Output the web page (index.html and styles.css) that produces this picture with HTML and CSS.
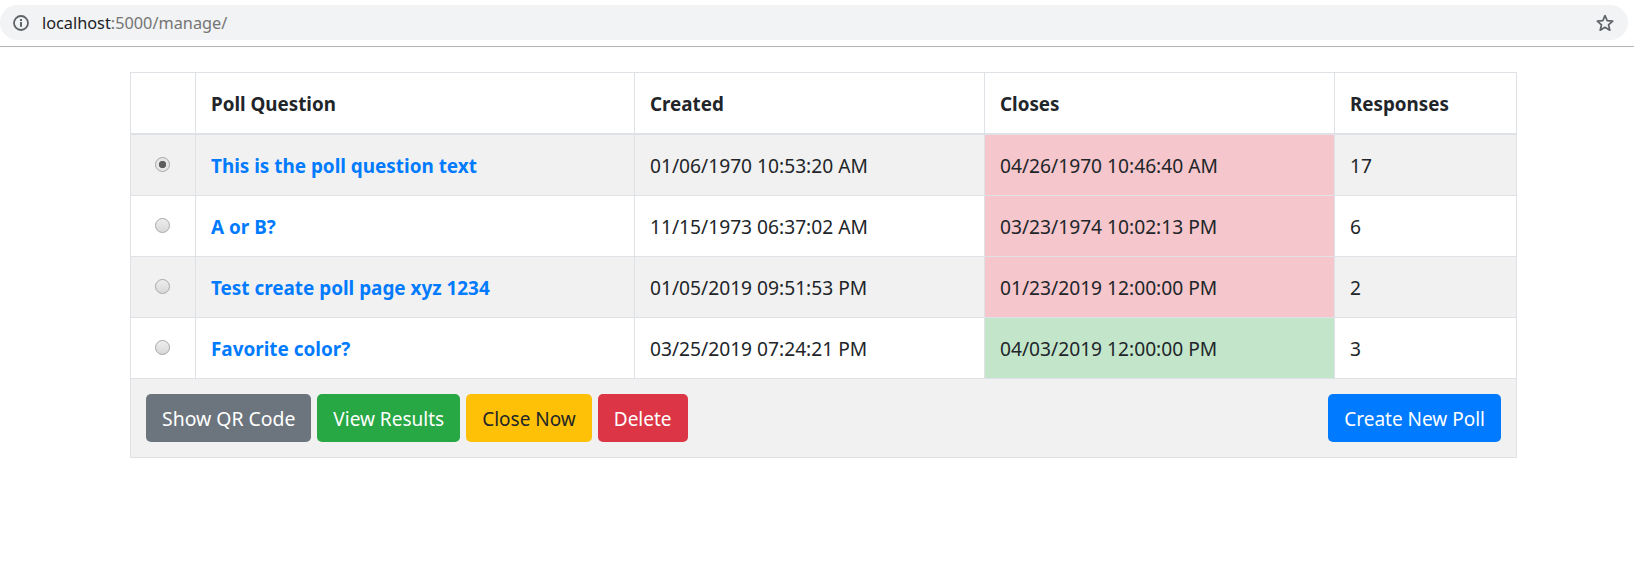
FILE: index.html
```html
<!DOCTYPE html>
<html lang="en">
<head>
  <meta charset="UTF-8">
  <title>Manage Polls</title>
  <link rel="stylesheet" href="styles.css">
</head>
<body>

  <div class="browser-bar">
    <div class="address">
      <svg class="info-icon" width="16" height="16" viewBox="0 0 16 16">
        <circle cx="8" cy="8" r="7" fill="none" stroke="#5f6368" stroke-width="1.8"/>
        <rect x="7" y="7" width="2" height="4.8" fill="#5f6368"/>
        <rect x="7" y="4" width="2" height="2" fill="#5f6368"/>
      </svg>
      <span class="url"><span class="host">localhost</span>:5000/manage/</span>
      <svg class="star-icon" width="20" height="20" viewBox="0 0 20 20">
        <path d="M10 2.6l2.2 5.1 5.5.5-4.2 3.6 1.3 5.4L10 14.3l-4.8 2.9 1.3-5.4-4.2-3.6 5.5-.5z" fill="none" stroke="#5f6368" stroke-width="1.7" stroke-linejoin="round"/>
      </svg>
    </div>
  </div>

  <div class="container">
    <table class="poll-table">
      <colgroup>
        <col class="col-select">
        <col class="col-question">
        <col class="col-created">
        <col class="col-closes">
        <col class="col-responses">
      </colgroup>
      <thead>
        <tr>
          <th></th>
          <th>Poll Question</th>
          <th>Created</th>
          <th>Closes</th>
          <th>Responses</th>
        </tr>
      </thead>
      <tbody>
        <tr class="striped">
          <td class="select"><span class="radio checked"></span></td>
          <td><a href="#">This is the poll question text</a></td>
          <td>01/06/1970 10:53:20 AM</td>
          <td class="closed">04/26/1970 10:46:40 AM</td>
          <td>17</td>
        </tr>
        <tr>
          <td class="select"><span class="radio"></span></td>
          <td><a href="#">A or B?</a></td>
          <td>11/15/1973 06:37:02 AM</td>
          <td class="closed">03/23/1974 10:02:13 PM</td>
          <td>6</td>
        </tr>
        <tr class="striped">
          <td class="select"><span class="radio"></span></td>
          <td><a href="#">Test create poll page xyz 1234</a></td>
          <td>01/05/2019 09:51:53 PM</td>
          <td class="closed">01/23/2019 12:00:00 PM</td>
          <td>2</td>
        </tr>
        <tr>
          <td class="select"><span class="radio"></span></td>
          <td><a href="#">Favorite color?</a></td>
          <td>03/25/2019 07:24:21 PM</td>
          <td class="open">04/03/2019 12:00:00 PM</td>
          <td>3</td>
        </tr>
      </tbody>
    </table>

    <div class="actions">
      <button class="btn btn-grey">Show QR Code</button>
      <button class="btn btn-green">View Results</button>
      <button class="btn btn-yellow">Close Now</button>
      <button class="btn btn-red">Delete</button>
      <button class="btn btn-blue push-right">Create New Poll</button>
    </div>
  </div>

</body>
</html>
```

FILE: styles.css
```css
* {
  margin: 0;
  padding: 0;
  box-sizing: border-box;
}

body, html {
  height: 100%;
  font-family: 'Noto Sans', 'Open Sans', sans-serif;
  color: #212529;
  background: #fff;
  overflow: hidden;
}

/* browser chrome */
.browser-bar {
  height: 47px;
  padding-top: 5px;
  border-bottom: 1px solid #b4b4b4;
}

.address {
  display: flex;
  align-items: center;
  width: 1628px;
  height: 35px;
  padding: 0 13px;
  background-color: #f1f3f4;
  border-radius: 17.5px;
}

.url {
  margin-left: 13px;
  font-size: 16.3px;
  color: #757575;
}

.host {
  color: #202124;
}

.star-icon {
  margin-left: auto;
}

/* table */
.container {
  width: 1387px;
  margin: 25px 0 0 130px;
}

.poll-table {
  width: 1386px;
  table-layout: fixed;
  border-collapse: collapse;
  font-size: 19.2px;
  line-height: 30px;
}

.col-select { width: 65px; }
.col-question { width: 439px; }
.col-created { width: 350px; }
.col-closes { width: 350px; }
.col-responses { width: 182px; }

th, td {
  border: 1px solid #dee2e6;
  padding: 16px 15px 14px;
  text-align: left;
}

th {
  font-size: 18.8px;
  font-weight: 700;
  border-bottom-width: 2px;
  color: #212529;
}

td a {
  font-size: 18.9px;
  color: #007bff;
  font-weight: 700;
  text-decoration: none;
}

.striped td {
  background-color: #f1f1f1;
}

td.closed {
  background-color: #f5c6cb;
}

td.open {
  background-color: #c3e6cb;
}

td.select {
  padding: 0 2px 0 0;
}

.radio {
  display: block;
  width: 15px;
  height: 15px;
  margin: -2px auto 0;
  border: 1px solid #a8a8a8;
  border-radius: 50%;
  background: linear-gradient(#eeeeee, #d8d8d8);
}

.radio.checked {
  background: radial-gradient(circle, #5e5e5e 0, #5e5e5e 3.4px, #e6e6e6 4px);
}

/* button row */
.actions {
  display: flex;
  gap: 6px;
  height: 79px;
  padding: 15px;
  background-color: #f1f1f1;
  border: 1px solid #dee2e6;
  border-top: none;
}

.btn {
  height: 48px;
  padding: 1px 16px 0;
  font-family: inherit;
  font-size: 19px;
  border: none;
  border-radius: 5px;
  color: #fff;
  cursor: pointer;
}

.btn-grey { background-color: #6c757d; font-size: 19.4px; }
.btn-green { background-color: #28a745; }
.btn-yellow { background-color: #ffc107; color: #212529; }
.btn-red { background-color: #dc3545; }
.btn-blue { background-color: #007bff; }

.push-right {
  margin-left: auto;
}
```
